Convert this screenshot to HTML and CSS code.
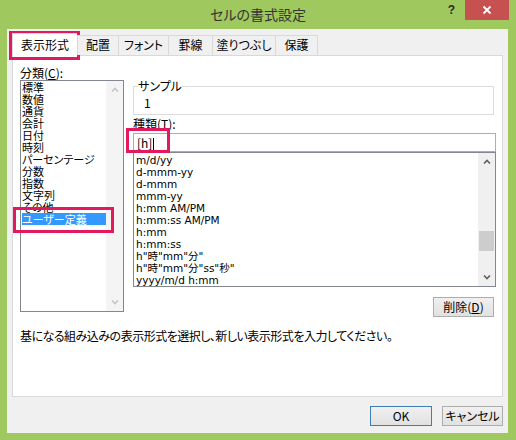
FILE: index.html
```html
<!DOCTYPE html>
<html lang="ja">
<head>
<meta charset="utf-8">
<title>セルの書式設定</title>
<link rel="stylesheet" href="styles.css">
</head>
<body>
<div class="window">
  <div class="titlebar">
    <div class="title">セルの書式設定</div>
    <div class="help">?</div>
    <div class="close"><svg width="10" height="10" viewBox="0 0 10 10"><path d="M1.5 1.5 L8.5 8.5 M8.5 1.5 L1.5 8.5" stroke="#fff" stroke-width="1.8" fill="none"/></svg></div>
  </div>
  <div class="client">
    <div class="tabs">
      <div class="tab active w1">表示形式</div>
      <div class="tab w2">配置</div>
      <div class="tab w3">フォント</div>
      <div class="tab w4">罫線</div>
      <div class="tab w5">塗りつぶし</div>
      <div class="tab w6 last">保護</div>
    </div>
    <div class="panel">
      <div class="cols">
        <div class="left">
          <div class="label">分類(<u>C</u>):</div>
          <div class="listbox cat">
            <div class="items">
              <div class="item">標準</div>
              <div class="item">数値</div>
              <div class="item">通貨</div>
              <div class="item">会計</div>
              <div class="item">日付</div>
              <div class="item">時刻</div>
              <div class="item">パーセンテージ</div>
              <div class="item">分数</div>
              <div class="item">指数</div>
              <div class="item">文字列</div>
              <div class="item">その他</div>
              <div class="item sel">ユーザー定義</div>
            </div>
            <div class="vscroll disabled">
              <div class="arrow"><svg width="8" height="5" viewBox="0 0 8 5"><polyline points="1,4.5 4,1.5 7,4.5" fill="none" stroke="#c4c4c4" stroke-width="1.6"/></svg></div>
              <div class="arrow"><svg width="8" height="5" viewBox="0 0 8 5"><polyline points="1,0.5 4,3.5 7,0.5" fill="none" stroke="#c4c4c4" stroke-width="1.6"/></svg></div>
            </div>
          </div>
        </div>
        <div class="right">
          <fieldset class="sample">
            <legend>サンプル</legend>
            <div class="sample-value">1</div>
          </fieldset>
          <div class="label type-label">種類(<u>T</u>):</div>
          <div class="input">[h]<span class="caret"></span></div>
          <div class="listbox fmt">
            <div class="items">
              <div class="item">m/d/yy</div>
              <div class="item">d-mmm-yy</div>
              <div class="item">d-mmm</div>
              <div class="item">mmm-yy</div>
              <div class="item">h:mm AM/PM</div>
              <div class="item">h:mm:ss AM/PM</div>
              <div class="item">h:mm</div>
              <div class="item">h:mm:ss</div>
              <div class="item">h"時"mm"分"</div>
              <div class="item">h"時"mm"分"ss"秒"</div>
              <div class="item">yyyy/m/d h:mm</div>
            </div>
            <div class="vscroll">
              <div class="arrow"><svg width="8" height="5" viewBox="0 0 8 5"><polyline points="1,4.5 4,1.5 7,4.5" fill="none" stroke="#606060" stroke-width="1.6"/></svg></div>
              <div class="thumb"></div>
              <div class="arrow"><svg width="8" height="5" viewBox="0 0 8 5"><polyline points="1,0.5 4,3.5 7,0.5" fill="none" stroke="#606060" stroke-width="1.6"/></svg></div>
            </div>
          </div>
          <div class="del-row"><button class="btn del">削除(<u>D</u>)</button></div>
        </div>
      </div>
      <div class="desc">基になる組み込みの表示形式を選択し、新しい表示形式を入力してください。</div>
    </div>
    <div class="footer">
      <button class="btn default ok">OK</button>
      <button class="btn cancel">キャンセル</button>
    </div>
  </div>
  <div class="mark m1"></div>
  <div class="mark m2"></div>
  <div class="mark m3"></div>
</div>
</body>
</html>
```
FILE: styles.css
```css
body {
  margin: 0;
  background: #9fc95e;
  font-family: "Noto Sans CJK JP", "Liberation Sans", sans-serif;
  font-size: 12px;
  font-feature-settings: "palt";
  color: #000;
}
.window {
  position: relative;
  width: 516px;
  height: 440px;
  background: #9fc95e;
  display: flex;
  flex-direction: column;
}
.titlebar {
  height: 29px;
  position: relative;
  flex: none;
}
.title {
  text-align: center;
  line-height: 29px;
  font-size: 14px;
  color: #333;
}
.help {
  position: absolute;
  right: 61px;
  top: 0;
  line-height: 21px;
  font-weight: bold;
  font-size: 12px;
  color: #2a2a2a;
  font-family: "Liberation Sans", sans-serif;
}
.close {
  position: absolute;
  right: 7px;
  top: 0;
  width: 44px;
  height: 20px;
  background: #c75050;
  display: flex;
  align-items: center;
  justify-content: center;
}
.client {
  margin: 0 8px 0 7px;
  height: 404px;
  box-sizing: border-box;
  background: #f0f0f0;
  padding: 4px 5px 0 5px;
}
.tabs {
  display: flex;
  align-items: flex-end;
  height: 23px;
  margin-bottom: -1px;
  position: relative;
  z-index: 1;
}
.tab {
  box-sizing: border-box;
  height: 20px;
  margin-bottom: 1px;
  border: 1px solid #d9d9d9;
  border-bottom: none;
  border-right: none;
  background: #f0f0f0;
  text-align: center;
  line-height: 18px;
  white-space: nowrap;
}
.tab.last { border-right: 1px solid #d9d9d9; }
.tab.active {
  height: 23px;
  margin-bottom: 0;
  background: #fff;
  padding-top: 2px;
  line-height: 18px;
}
.w1 { width: 65px; }
.w2 { width: 41px; }
.w3 { width: 50px; }
.w4 { width: 44px; }
.w5 { width: 63px; }
.w6 { width: 43px; }

.panel {
  height: 342px;
  box-sizing: border-box;
  border: 1px solid #d9d9d9;
  background: #fff;
}
.cols {
  display: flex;
  gap: 9px;
  padding: 9px 5px 0 7px;
}
.left { width: 104px; flex: none; }
.right { width: 363px; flex: none; }
.label {
  height: 15px;
  line-height: 15px;
  white-space: nowrap;
}
.listbox {
  box-sizing: border-box;
  border: 1px solid #828790;
  background: #fff;
  display: flex;
}
.items { flex: 1; }
.item {
  height: 12px;
  line-height: 12px;
  white-space: nowrap;
}
.cat { height: 232px; }
.cat .items { padding-left: 1px; }
.cat .item { font-size: 11px; }
.item.sel { background: #3399ff; color: #fff; }
.vscroll {
  width: 17px;
  flex: none;
  background: #f0f0f0;
  display: flex;
  flex-direction: column;
}
.vscroll .arrow {
  height: 17px;
  display: flex;
  align-items: center;
  justify-content: center;
}
.vscroll.disabled { justify-content: space-between; background: #f4f4f4; }
.thumb {
  margin: 61px 1px auto 1px;
  height: 20px;
  background: #cdcdcd;
}
.sample {
  box-sizing: border-box;
  margin: 15px 0 0 0;
  width: 361px;
  height: 35px;
  padding: 0 0 0 4px;
  border: 1px solid #dcdcdc;
}
.sample legend {
  padding: 0;
  line-height: 12px;
}
.sample-value {
  margin-top: 4px;
  padding-left: 6px;
  line-height: 14px;
}
.type-label {
  margin-top: 2px;
  height: 14px;
  line-height: 14px;
}
.input {
  margin-top: 2px;
  box-sizing: border-box;
  height: 19px;
  border: 1px solid #abadb3;
  padding-left: 3px;
  line-height: 17px;
  background: #fff;
}
.caret {
  display: inline-block;
  width: 1px;
  height: 12px;
  background: #000;
  vertical-align: -2px;
  margin-left: 1px;
}
.fmt { height: 135px; }
.fmt .items { padding: 1px 0 0 2px; }
.fmt .item {
  font-family: "DejaVu Sans", "Noto Sans CJK JP", sans-serif;
  font-size: 10.5px;
}
.del-row {
  margin-top: 10px;
  display: flex;
  justify-content: flex-end;
  padding-right: 2px;
}
.btn {
  box-sizing: border-box;
  height: 20px;
  border: 1px solid #adadad;
  background: linear-gradient(#f0f0f0, #e1e1e1);
  font-family: "Noto Sans CJK JP", "Liberation Sans", sans-serif;
  font-feature-settings: "palt";
  font-size: 12px;
  line-height: 16px;
  padding: 0;
  color: #000;
}
.del { width: 61px; }
.desc {
  margin-top: 12px;
  padding-left: 7px;
  line-height: 14px;
  white-space: nowrap;
  letter-spacing: -0.5px;
}
.footer {
  margin-top: 9px;
  display: flex;
  justify-content: flex-end;
  gap: 10px;
}
.ok { width: 62px; }
.cancel { width: 61px; }
.btn.default { border-color: #3c7fb1; }
.mark {
  position: absolute;
  box-sizing: border-box;
  border: 3px solid #e2195f;
}
.m1 { left: 9px; top: 31px; width: 71px; height: 29px; }
.m2 { left: 126px; top: 128px; width: 44px; height: 25px; }
.m3 { left: 13px; top: 207px; width: 101px; height: 26px; }
```
